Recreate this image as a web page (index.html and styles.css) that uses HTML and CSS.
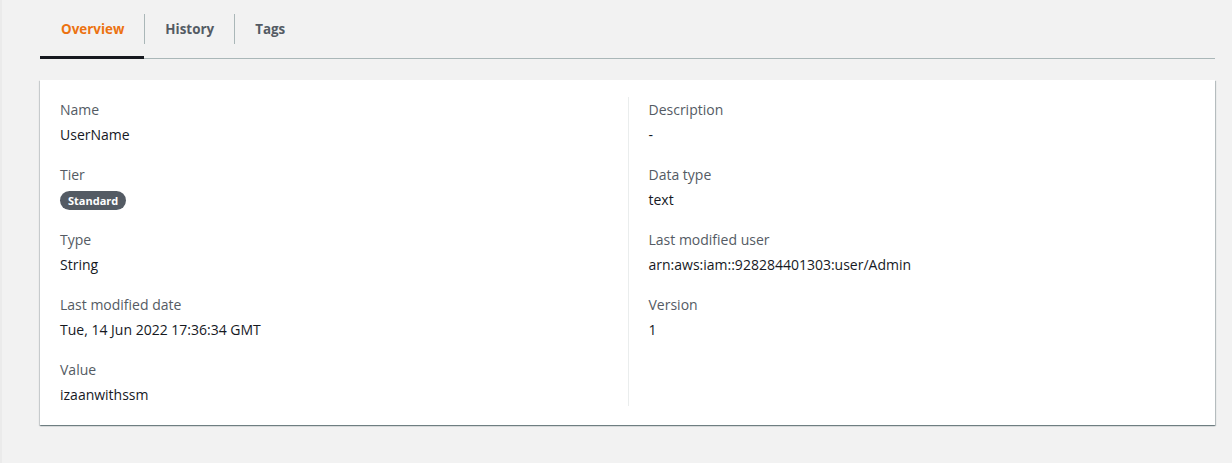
FILE: index.html
```html
<!DOCTYPE html>
<html lang="en">
<head>
<meta charset="utf-8">
<title>Parameter details</title>
<link rel="stylesheet" href="styles.css">
</head>
<body>
<div class="page">
  <nav class="tabs">
    <div class="tab active"><span>Overview</span></div>
    <div class="tab"><span>History</span></div>
    <div class="tab"><span>Tags</span></div>
  </nav>
  <section class="card">
    <div class="col">
      <div class="field"><div class="label">Name</div><div class="value">UserName</div></div>
      <div class="field"><div class="label">Tier</div><div class="value"><span class="badge">Standard</span></div></div>
      <div class="field"><div class="label">Type</div><div class="value">String</div></div>
      <div class="field"><div class="label">Last modified date</div><div class="value">Tue, 14 Jun 2022 17:36:34 GMT</div></div>
      <div class="field"><div class="label">Value</div><div class="value">izaanwithssm</div></div>
    </div>
    <div class="col right">
      <div class="field"><div class="label">Description</div><div class="value">-</div></div>
      <div class="field"><div class="label">Data type</div><div class="value">text</div></div>
      <div class="field"><div class="label">Last modified user</div><div class="value">arn:aws:iam::928284401303:user/Admin</div></div>
      <div class="field"><div class="label">Version</div><div class="value">1</div></div>
    </div>
  </section>
</div>
</body>
</html>
```
FILE: styles.css
```css
html, body {
  margin: 0;
  padding: 0;
  background: #f2f2f2;
  font-family: "Open Sans", "Noto Sans", sans-serif;
  color: #16191f;
}
.page {
  padding: 0 17px 0 40px;
  min-height: 463px;
  box-sizing: border-box;
  border-left: 2px solid #ebebeb;
}
.tabs {
  display: flex;
  height: 58px;
  border-bottom: 1px solid #aab7b8;
  margin-left: -2px;
}
.tab {
  position: relative;
  display: flex;
  align-items: center;
  padding: 1px 20px 0 21px;
  height: 54px;
  margin-top: 1px;
  font-size: 13.4px;
  font-weight: 700;
  color: #545b64;
  border-bottom: 3px solid transparent;
}
.tab + .tab::before {
  content: "";
  position: absolute;
  left: 0;
  top: 13px;
  height: 30px;
  border-left: 1px solid #aab7b8;
}
.tab.active {
  color: #ec7211;
  border-bottom-color: #16191f;
}
.card {
  margin-top: 21px;
  margin-left: -2px;
  background: #fff;
  display: grid;
  grid-template-columns: 1fr 1fr;
  padding: 19px 20px 19px;
  box-shadow: 0 1px 1px 0 rgba(0, 28, 36, 0.35), 1px 1px 1px 0 rgba(0, 28, 36, 0.2), -1px 1px 1px 0 rgba(0, 28, 36, 0.12);
}
.col {
  display: flex;
  flex-direction: column;
  gap: 18px;
}
.col.right {
  border-left: 1px solid #eaeded;
  padding-left: 20px;
  margin-top: -2px;
}
.label {
  font-size: 14px;
  line-height: 22px;
  color: #545b64;
}
.col.right .field:first-child .label {
  margin-top: 2px;
}
.value {
  font-size: 14px;
  line-height: 22px;
  margin-top: 3px;
  color: #16191f;
}
.badge {
  display: inline-block;
  background: #545b64;
  color: #fff;
  font-size: 11px;
  font-weight: 700;
  line-height: 19px;
  padding: 0 8px;
  border-radius: 10px;
}
```
